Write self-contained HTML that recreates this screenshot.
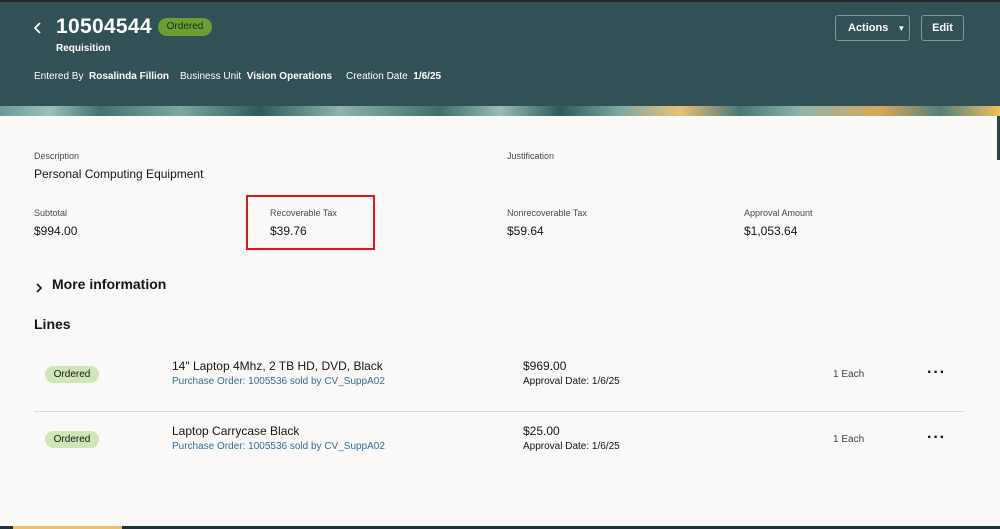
<!DOCTYPE html>
<html><head><style>
*{margin:0;padding:0;box-sizing:border-box}
body{width:1000px;height:529px;overflow:hidden;background:#faf9f8;font-family:"Liberation Sans",sans-serif;color:#161513;position:relative}
.hdr{position:absolute;left:0;top:0;width:1000px;height:106px;background:#325156;border-top:2px solid #2a2a2a}
.strip{position:absolute;left:0;top:106px;width:1000px;height:10px;background:linear-gradient(90deg,#6c9a98 0,#9cc0bd 5%,#42706f 10%,#7fa7a3 18%,#2f5a5a 26%,#8fb3ae 34%,#416c6a 44%,#9abcb6 50%,#2f5a5a 56%,#7fa7a3 62%,#e8c07a 68%,#4a7774 74%,#8fb3ae 80%,#d9a85a 88%,#557f7c 94%,#f0c060 100%)}
.w{color:#fff;position:absolute;font-weight:bold}
.lbl{position:absolute;font-size:9px;color:#4a4a4a}
.val{position:absolute;font-size:12px;color:#161513}
.pill{position:absolute;background:#d0e6b8;border-radius:9px;font-size:10px;width:54px;height:17px;line-height:17px;text-align:center}
.t{position:absolute;font-size:12px}
.l{position:absolute;font-size:10px;color:#2f6f9a}
.s{position:absolute;font-size:10px}
.dots{position:absolute;font-size:16px;font-weight:bold;letter-spacing:1px}
</style></head><body>
<div class="hdr"></div>
<div class="strip"></div>
<svg style="position:absolute;left:33px;top:21px" width="10" height="14"><path d="M7 2 L2 7 L7 12" stroke="#fff" stroke-width="1.8" fill="none"/></svg>
<div class="w" style="left:56px;top:15px;font-size:21px;letter-spacing:0.3px">10504544</div>
<div style="position:absolute;left:158px;top:18px;width:54px;height:18px;border-radius:9px;background:#6aa033;font-size:10px;line-height:18px;text-align:center;color:#1c2a10">Ordered</div>
<div class="w" style="left:56px;top:43px;font-size:10px">Requisition</div>
<div class="w" style="left:34px;top:71px;font-size:10px;font-weight:normal">Entered By &nbsp;<b>Rosalinda Fillion</b></div>
<div class="w" style="left:180px;top:71px;font-size:10px;font-weight:normal">Business Unit &nbsp;<b>Vision Operations</b></div>
<div class="w" style="left:346px;top:71px;font-size:10px;font-weight:normal">Creation Date &nbsp;<b>1/6/25</b></div>
<div style="position:absolute;left:835px;top:15px;width:75px;height:26px;border:1px solid #7f9799;border-radius:3px;color:#fff;font-size:11px;font-weight:bold;line-height:24px;padding-left:12px">Actions <span style="font-size:8px;margin-left:6px">▼</span></div>
<div style="position:absolute;left:921px;top:15px;width:43px;height:26px;border:1px solid #7f9799;border-radius:3px;color:#fff;font-size:11px;font-weight:bold;line-height:24px;text-align:center">Edit</div>
<div style="position:absolute;left:997px;top:116px;width:3px;height:44px;background:#2a4446"></div>

<div class="lbl" style="left:34px;top:151px">Description</div>
<div class="val" style="left:34px;top:167px">Personal Computing Equipment</div>
<div class="lbl" style="left:507px;top:151px">Justification</div>
<div class="lbl" style="left:34px;top:208px">Subtotal</div>
<div class="val" style="left:34px;top:224px">$994.00</div>
<div class="lbl" style="left:270px;top:208px">Recoverable Tax</div>
<div class="val" style="left:270px;top:224px">$39.76</div>
<div style="position:absolute;left:246px;top:195px;width:129px;height:55px;border:2px solid #e0161b"></div>
<div class="lbl" style="left:507px;top:208px">Nonrecoverable Tax</div>
<div class="val" style="left:507px;top:224px">$59.64</div>
<div class="lbl" style="left:744px;top:208px">Approval Amount</div>
<div class="val" style="left:744px;top:224px">$1,053.64</div>
<svg style="position:absolute;left:35px;top:282px" width="8" height="12"><path d="M2 2 L6 6 L2 10" stroke="#161513" stroke-width="1.6" fill="none"/></svg>
<div style="position:absolute;left:52px;top:276px;font-size:14px;font-weight:bold">More information</div>
<div style="position:absolute;left:34px;top:316px;font-size:14px;font-weight:bold">Lines</div>

<div class="pill" style="left:45px;top:366px">Ordered</div>
<div class="t" style="left:172px;top:359px">14" Laptop 4Mhz, 2 TB HD, DVD, Black</div>
<div class="l" style="left:172px;top:376px">Purchase Order: 1005536 sold by CV_SuppA02</div>
<div class="t" style="left:523px;top:359px">$969.00</div>
<div class="s" style="left:523px;top:376px">Approval Date: 1/6/25</div>
<div class="s" style="left:833px;top:369px;color:#444">1 Each</div>
<div class="dots" style="left:927px;top:364px">···</div>
<div style="position:absolute;left:34px;top:411px;width:930px;height:1px;background:#dedcda"></div>
<div class="pill" style="left:45px;top:431px">Ordered</div>
<div class="t" style="left:172px;top:424px">Laptop Carrycase Black</div>
<div class="l" style="left:172px;top:441px">Purchase Order: 1005536 sold by CV_SuppA02</div>
<div class="t" style="left:523px;top:424px">$25.00</div>
<div class="s" style="left:523px;top:441px">Approval Date: 1/6/25</div>
<div class="s" style="left:833px;top:434px;color:#444">1 Each</div>
<div class="dots" style="left:927px;top:429px">···</div>
<div style="position:absolute;left:0;top:526px;width:1000px;height:3px;background:#1f3336"></div>
<div style="position:absolute;left:13px;top:526px;width:109px;height:3px;background:#e8c26a"></div>
</body></html>
